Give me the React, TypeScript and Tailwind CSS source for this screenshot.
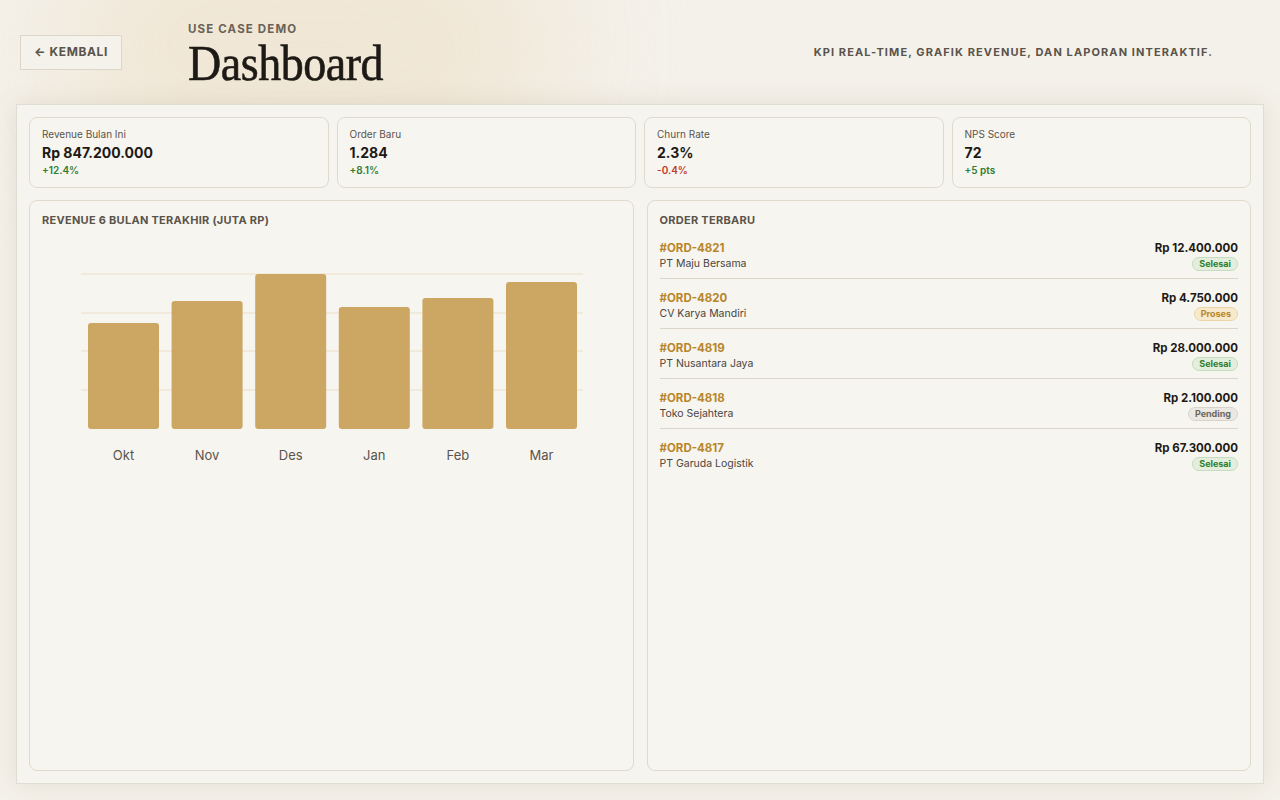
const kpis = [
  { l: "Revenue Bulan Ini", v: "Rp 847.200.000", d: "+12.4%", c: "text-[#2f7d32]" },
  { l: "Order Baru", v: "1.284", d: "+8.1%", c: "text-[#2f7d32]" },
  { l: "Churn Rate", v: "2.3%", d: "-0.4%", c: "text-[#c0392b]" },
  { l: "NPS Score", v: "72", d: "+5 pts", c: "text-[#2f7d32]" },
];
const orders = [
  ["#ORD-4821", "PT Maju Bersama", "Rp 12.400.000", "Selesai"],
  ["#ORD-4820", "CV Karya Mandiri", "Rp 4.750.000", "Proses"],
  ["#ORD-4819", "PT Nusantara Jaya", "Rp 28.000.000", "Selesai"],
  ["#ORD-4818", "Toko Sejahtera", "Rp 2.100.000", "Pending"],
  ["#ORD-4817", "PT Garuda Logistik", "Rp 67.300.000", "Selesai"],
];
const badge: Record<string, string> = {
  Selesai: "bg-[#e3efdc] text-[#2f7d32] border-[#c5dcc0]",
  Proses: "bg-[#f6e9cc] text-[#b8862a] border-[#ecd6a6]",
  Pending: "bg-[#ebe8e2] text-[#6b665e] border-[#d8d4cc]",
};
const bars = [
  ["Okt", 322], ["Nov", 300], ["Des", 273], ["Jan", 306], ["Feb", 297], ["Mar", 281],
] as const;

export default function App() {
  return (
    <div className="w-[1280px] h-[800px] bg-[#f4f1ea] relative overflow-hidden" style={{ fontFamily: "Inter, 'Noto Sans', sans-serif" }}>
      <div className="absolute left-[60px] top-[-80px] w-[500px] h-[250px] rounded-full bg-[#efe4d0] blur-3xl opacity-80" />
      <div className="relative flex items-center h-[104px] px-5">
        <button className="w-[102px] h-[35px] border border-[#dcd6ca] bg-[#f5f2eb] text-[12px] font-bold tracking-wider text-[#5a544b] flex items-center justify-center gap-1">← KEMBALI</button>
        <div className="ml-[66px] mt-[8px]">
          <div className="text-[11.5px] font-bold tracking-[0.1em] text-[#6a6256] leading-none">USE CASE DEMO</div>
          <div className="text-[50px] leading-none text-[#1d1a16] mt-[3px] tracking-[-0.01em] scale-x-[0.92] origin-left [-webkit-text-stroke:0.6px_#1d1a16]" style={{ fontFamily: "'Liberation Serif', serif" }}>Dashboard</div>
        </div>
        <div className="ml-auto mr-[47px] text-[11px] font-bold tracking-[0.1em] text-[#5a544b]">KPI REAL-TIME, GRAFIK REVENUE, DAN LAPORAN INTERAKTIF.</div>
      </div>
      <div className="relative mx-4 h-[680px] border border-[#e2ddd3] bg-[#f6f4ee] shadow-[0_0_24px_rgba(120,100,60,0.12)] px-[12px] pt-[12px] pb-[12px] flex flex-col gap-[12px]">
        <div className="grid grid-cols-4 gap-[8px]">
          {kpis.map((k) => (
            <div key={k.l} className="h-[71px] rounded-lg border border-[#e0dacd] bg-[#f7f5f0] px-3 pt-[11px]">
              <div className="text-[10px] text-[#5a544b] leading-none">{k.l}</div>
              <div className="text-[14px] font-bold text-[#1d1a16] mt-[7px] leading-none">{k.v}</div>
              <div className={`text-[10px] font-semibold mt-[5px] leading-none ${k.c}`}>{k.d}</div>
            </div>
          ))}
        </div>
        <div className="flex-1 grid grid-cols-2 gap-[13px]">
          <div className="rounded-lg border border-[#e0dacd] bg-[#f7f5f0] px-3 pt-[11px]">
            <div className="text-[11px] font-bold tracking-wide text-[#5a544b]">REVENUE 6 BULAN TERAKHIR (JUTA RP)</div>
            <svg width="580" height="250" className="mt-[-6px] ml-[-12px]" viewBox="29 222 580 250">
              {[273, 312, 350, 389].map((y) => (
                <line key={y} x1="80" x2="582" y1={y} y2={y} stroke="#efe6d6" strokeWidth="1.5" />
              ))}
              {bars.map(([m, t], i) => {
                const x = 87 + i * 83.6;
                return (
                  <g key={m}>
                    <rect x={x} y={t} width="71" height={428 - t} rx="3" fill="#cba763" />
                    <text x={x + 35.5} y="459" textAnchor="middle" fontSize="13" fill="#5a544b" fontFamily="Inter, sans-serif">{m}</text>
                  </g>
                );
              })}
            </svg>
          </div>
          <div className="rounded-lg border border-[#e0dacd] bg-[#f7f5f0] px-3 pt-[11px]">
            <div className="text-[11px] font-bold tracking-wide text-[#5a544b]">ORDER TERBARU</div>
            <div className="mt-[12px] flex flex-col gap-[12px]">
              {orders.map((o, i) => (
                <div key={o[0]} className={`flex justify-between ${i < 4 ? "border-b border-[#dcd6ca] pb-[7px]" : ""}`}>
                  <div>
                    <div className="text-[11.5px] font-bold text-[#b8862a] leading-[14px]">{o[0]}</div>
                    <div className="text-[10.5px] text-[#4a453e] mt-[2px] leading-[14px]">{o[1]}</div>
                  </div>
                  <div className="flex flex-col items-end">
                    <div className="text-[11.5px] font-bold text-[#1d1a16] leading-[14px]">{o[2]}</div>
                    <div className={`mt-[2px] text-[9px] font-bold px-[6px] rounded-full border leading-[12px] ${badge[o[3]]}`}>{o[3]}</div>
                  </div>
                </div>
              ))}
            </div>
          </div>
        </div>
      </div>
    </div>
  );
}
